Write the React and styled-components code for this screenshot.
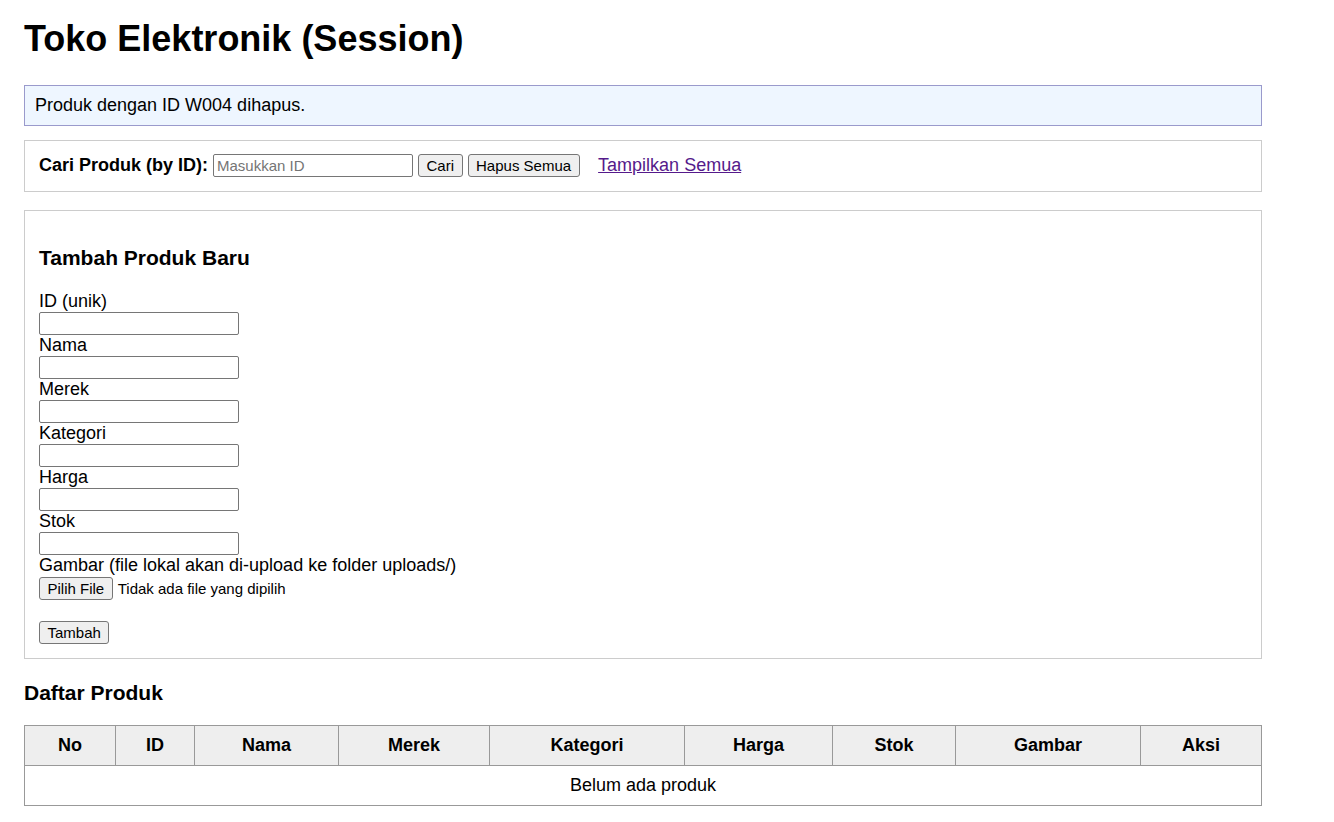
import React from "react";
import styled, { createGlobalStyle } from "styled-components";

const GlobalStyle = createGlobalStyle`
  html, body { margin: 0; padding: 0; background: #fff; }
  body {
    font-family: "Liberation Sans", Arial, sans-serif;
    font-size: 18px;
    color: #000;
  }
  * { box-sizing: border-box; }
`;

const Page = styled.div`
  padding: 18px 0 20px 24px;
  width: 1262px;
`;

const Title = styled.h1`
  font-size: 36px;
  font-weight: bold;
  margin: 0 0 25.6px;
  line-height: 41.4px;
`;

const Alert = styled.div`
  background: #eef6ff;
  border: 1px solid #9a9acc;
  padding: 9px 10px;
  line-height: 20.7px;
  margin-bottom: 14px;
`;

const SearchBox = styled.form`
  border: 1px solid #ccc;
  padding: 13px 14px;
  display: flex;
  align-items: center;
  gap: 5px;
  height: 52px;
  margin-bottom: 18px;
`;

const SearchLabel = styled.label`
  font-weight: bold;
  font-size: 18px;
`;

const TextInput = styled.input`
  display: ${(p) => (p.$block ? "block" : "inline-block")};
  width: 200px;
  height: 23px;
  margin: 0;
  border: 1px solid #767676;
  border-radius: 2px;
  padding: 1px 3px;
  font-family: "Liberation Sans", Arial, sans-serif;
  font-size: 15px;
  background: #fff;
  &::placeholder { color: #757575; }
`;

const Button = styled.button`
  height: 23px;
  padding: 0 7.5px;
  margin: 0;
  background: #efefef;
  border: 1px solid #767676;
  border-radius: 3px;
  font-family: "Liberation Sans", Arial, sans-serif;
  font-size: 15px;
  color: #000;
  line-height: 21px;
`;

const Link = styled.a`
  color: #551a8b;
  text-decoration: underline;
  margin-left: 13.5px;
  font-size: 18px;
`;

const FormBox = styled.form`
  border: 1px solid #ccc;
  padding: 14.5px 14px 14px;
`;

const SectionTitle = styled.h3`
  font-size: 21px;
  font-weight: bold;
  line-height: 24px;
  margin: ${(p) => p.$margin};
`;

const FieldLabel = styled.label`
  display: block;
  line-height: 21px;
  font-size: 18px;
`;

const FileRow = styled.div`
  display: flex;
  align-items: center;
  gap: 5px;
  height: 24px;
  margin-bottom: 21px;
`;

const FileStatus = styled.span`
  font-size: 15px;
`;

const Table = styled.table`
  width: 1237px;
  border-collapse: collapse;
  table-layout: fixed;
`;

const Th = styled.th`
  background: #eee;
  border: 1px solid #999;
  padding: 9px;
  line-height: 21px;
  font-weight: bold;
  font-size: 18px;
  text-align: center;
`;

const Td = styled.td`
  border: 1px solid #999;
  padding: 9px;
  line-height: 21px;
  text-align: center;
  font-size: 18px;
`;

const columns = [
  ["No", 91],
  ["ID", 79],
  ["Nama", 144],
  ["Merek", 151],
  ["Kategori", 195],
  ["Harga", 148],
  ["Stok", 123],
  ["Gambar", 185],
  ["Aksi", 121],
];

const fields = ["ID (unik)", "Nama", "Merek", "Kategori", "Harga", "Stok"];

export default function App() {
  return (
    <>
      <GlobalStyle />
      <Page>
        <Title>Toko Elektronik (Session)</Title>
        <Alert>Produk dengan ID W004 dihapus.</Alert>
        <SearchBox onSubmit={(e) => e.preventDefault()}>
          <SearchLabel>Cari Produk (by ID):</SearchLabel>
          <TextInput placeholder="Masukkan ID" />
          <Button type="submit">Cari</Button>
          <Button type="button">Hapus Semua</Button>
          <Link href="#">Tampilkan Semua</Link>
        </SearchBox>
        <FormBox onSubmit={(e) => e.preventDefault()}>
          <SectionTitle $margin="21px 0">Tambah Produk Baru</SectionTitle>
          {fields.map((f) => (
            <React.Fragment key={f}>
              <FieldLabel>{f}</FieldLabel>
              <TextInput $block />
            </React.Fragment>
          ))}
          <FieldLabel>Gambar (file lokal akan di-upload ke folder uploads/)</FieldLabel>
          <FileRow>
            <Button type="button">Pilih File</Button>
            <FileStatus>Tidak ada file yang dipilih</FileStatus>
          </FileRow>
          <Button type="submit">Tambah</Button>
        </FormBox>
        <SectionTitle $margin="22px 0 20px">Daftar Produk</SectionTitle>
        <Table>
          <colgroup>
            {columns.map(([n, w]) => (
              <col key={n} width={w} />
            ))}
          </colgroup>
          <thead>
            <tr>
              {columns.map(([n]) => (
                <Th key={n}>{n}</Th>
              ))}
            </tr>
          </thead>
          <tbody>
            <tr>
              <Td colSpan={9}>Belum ada produk</Td>
            </tr>
          </tbody>
        </Table>
      </Page>
    </>
  );
}
